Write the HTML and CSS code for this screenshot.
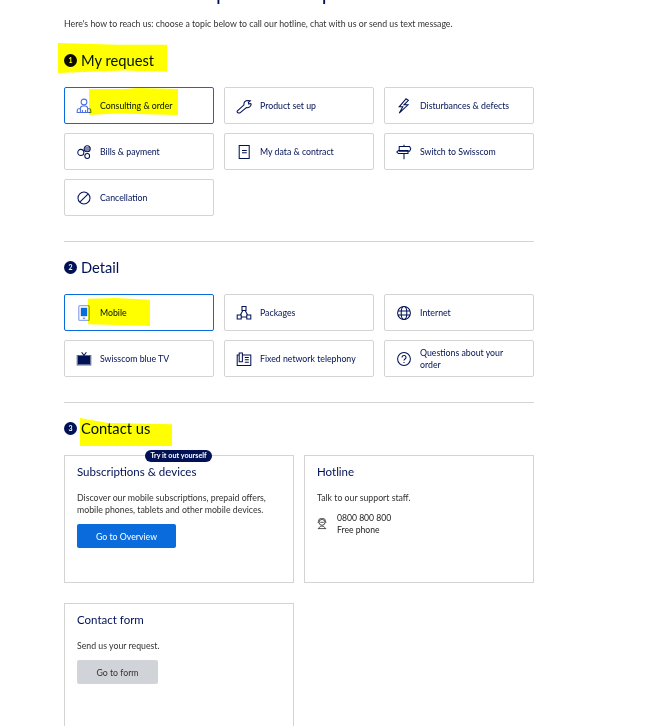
FILE: index.html
```html
<!DOCTYPE html>
<html lang="en">
<head>
<meta charset="utf-8">
<title>Contact</title>
<link rel="stylesheet" href="styles.css">
</head>
<body>
<main class="page">
  <h1 class="title">Contact help and shop</h1>
  <p class="intro">Here's how to reach us: choose a topic below to call our hotline, chat with us or send us text message.</p>

  <section class="step">
    <h2 class="step-title"><span class="num num-first">1</span>My request</h2>
    <div class="tiles">
      <a class="tile tile-on"><svg class="ico" viewBox="0 0 20 20"><g class="sel"><circle cx="10" cy="5" r="3.600"/><path d="M5.500 18v-5a3 3 0 0 1 3-3h3a3 3 0 0 1 3 3v5zM5.500 13.500H3.500a2 2 0 0 0-2 2V18h4M14.500 13.500h2a2 2 0 0 1 2 2V18h-4M8 18v-3M12 18v-3"/></g></svg><span>Consulting &amp; order</span></a>
      <a class="tile"><svg class="ico" viewBox="0 0 20 20"><path d="M1.500 16.500 10 8.500c-.5-3 1.500-5.500 5-5.500l3 .5-2.500 2 .5 2 2-.5 1 .5c0 3-3 5-6 4.500L5 18.500c-1.500 1-4.500-.5-3.500-2z"/></svg><span>Product set up</span></a>
      <a class="tile"><svg class="ico" viewBox="0 0 20 20"><path d="M12.500 1 4 11h4.500l-4.500 8 11-10.500h-5L15.500 3z"/></svg><span>Disturbances &amp; defects</span></a>
      <a class="tile"><svg class="ico" viewBox="0 0 20 20"><circle cx="14" cy="6" r="3.800"/><circle cx="6" cy="10.500" r="3.800"/><circle cx="14" cy="15" r="3"/><path d="M10.500 5h7M10.500 7.500h7"/></svg><span>Bills &amp; payment</span></a>
      <a class="tile"><svg class="ico" viewBox="0 0 20 20"><path d="M4 2h12.500v16H4zM7.500 8h6M7.500 11h6"/></svg><span>My data &amp; contract</span></a>
      <a class="tile"><svg class="ico" viewBox="0 0 20 20"><path d="M4 3h13l1.500 3L17 9H4zM3 8h12v4H3L1 10zM10 1v2M10 12v7"/></svg><span>Switch to Swisscom</span></a>
      <a class="tile"><svg class="ico" viewBox="0 0 20 20"><circle cx="10" cy="10" r="7.500"/><path d="M4.700 15.300 15.300 4.700"/></svg><span>Cancellation</span></a>
    </div>
  </section>

  <hr class="rule">

  <section class="step">
    <h2 class="step-title"><span class="num">2</span>Detail</h2>
    <div class="tiles">
      <a class="tile tile-on"><svg class="ico" viewBox="0 0 20 20"><rect class="sel-soft" x="3.500" y=".8" width="13" height="18.400" rx="1.500"/><rect class="fill-blue" x="6" y="3.500" width="8" height="10.500"/><path class="sel" d="M8.500 16.500h3"/></svg><span>Mobile</span></a>
      <a class="tile"><svg class="ico" viewBox="0 0 20 20"><path d="M7.500 2h5v5h-5zM1.500 12.500h5v5h-5zM13.500 12.500h5v5h-5zM8.500 7l-3 5.500M11.500 7l3 5.500M6.500 15h7"/></svg><span>Packages</span></a>
      <a class="tile"><svg class="ico" viewBox="0 0 20 20"><circle cx="10" cy="10" r="8"/><ellipse cx="10" cy="10" rx="3.500" ry="8"/><path d="M2.500 7.500h15M2.500 12.500h15"/></svg><span>Internet</span></a>
      <a class="tile"><svg class="ico" viewBox="0 0 20 20"><rect class="fill-navy" x="2" y="6" width="16" height="11"/><path class="amber" d="M1.500 5.500h17v12h-17z"/><path d="M7 1.500 10 5.500l3-4"/></svg><span>Swisscom blue TV</span></a>
      <a class="tile"><svg class="ico" viewBox="0 0 20 20"><path d="M1.500 18V5h2.500V2.500h4V5h10.500v13zM4 5v8.500h4V5M11 8h5M11 11h5M11 14h5"/></svg><span>Fixed network telephony</span></a>
      <a class="tile"><svg class="ico" viewBox="0 0 20 20"><circle cx="10" cy="10" r="8"/><path d="M7.500 8c0-3.300 5-3.300 5 0 0 2-2.500 2-2.500 4"/><path d="M10 13.600v1.300"/></svg><span class="tile-narrow">Questions about your order</span></a>
    </div>
  </section>

  <hr class="rule">

  <section class="step">
    <h2 class="step-title"><span class="num">3</span>Contact us</h2>
    <div class="cards">
      <article class="card">
        <span class="badge">Try it out yourself</span>
        <h3 class="card-title">Subscriptions &amp; devices</h3>
        <p class="card-text">Discover our mobile subscriptions, prepaid offers, mobile phones, tablets and other mobile devices.</p>
        <a class="btn btn-primary">Go to Overview</a>
      </article>
      <article class="card">
        <h3 class="card-title">Hotline</h3>
        <p class="card-text">Talk to our support staff.</p>
        <div class="phone">
          <svg class="phone-ico" viewBox="0 0 12 14"><circle cx="6" cy="5" r="3.500"/><path d="M1.500 6V4.500a4.500 4.500 0 0 1 9 0V6M4 5h4M1 12.500h10M2.500 12.500c0-2 1.500-3 3.500-3s3.500 1 3.500 3"/></svg>
          <div class="phone-text">0800 800 800<br>Free phone</div>
        </div>
      </article>
      <article class="card">
        <h3 class="card-title">Contact form</h3>
        <p class="card-text">Send us your request.</p>
        <a class="btn btn-muted">Go to form</a>
      </article>
    </div>
  </section>

  <span class="mark mark-a"></span>
  <span class="mark mark-b"></span>
  <span class="mark mark-c"></span>
  <span class="mark mark-d"></span>
</main>
</body>
</html>
```

FILE: styles.css
```css
* { box-sizing: border-box; }
html, body { height: 100%; margin: 0; overflow: hidden; background: #fff; }
body { font-family: "Lato", "Open Sans", sans-serif; color: #001155; }
.page { display: flow-root; position: relative; width: 470px; margin-left: 64px; height: 100%; }
.title { margin: -26px 0 0; padding-left: 30px; height: 44px; font-family: "Open Sans", sans-serif; font-size: 23px; line-height: 30px; font-weight: 400; white-space: nowrap; color: #001155; }
.intro { margin: 0 0 18px; height: 12px; font-size: 8.750px; line-height: 12px; color: #333; white-space: nowrap; }
.step { margin: 0; }
.step-title { display: flex; align-items: center; margin: 0; height: 24px; font-size: 14.700px; font-weight: 400; color: #001155; }
.num { display: flex; align-items: center; justify-content: center; width: 13px; height: 13px; margin-right: 4px; border-radius: 50%; background: #001155; color: #fff; font-size: 7px; font-weight: 700; }
.num-first { background: #0b0b1e; }
.tiles { display: grid; grid-template-columns: repeat(3, 150px); grid-auto-rows: 37px; gap: 9px 10px; margin-top: 15px; }
.tile { display: flex; align-items: center; gap: 8px; padding: 0 11px; border: 1px solid #d4d4d4; border-radius: 2px; background: #fff; font-size: 8.750px; line-height: 12px; color: #001155; }
.tile-on { border-color: #0a6cdc; }
.tile-narrow { width: 95px; }
.ico { flex: none; width: 16px; height: 16px; fill: none; stroke: #001155; stroke-width: 1.300; }
.sel { stroke: #4a6fe0; }
.sel-soft { stroke: #8fa8ee; stroke-width: 1.600; }
.fill-blue { fill: #0a6cdc; stroke: none; }
.fill-navy { fill: #001155; stroke: none; }
.amber { stroke: #5a6a8a; }
.rule { margin: 25px 0 13px; border: 0; border-top: 1px solid #d4d4d4; }
.cards { display: grid; grid-template-columns: repeat(2, 230px); grid-auto-rows: 128px; gap: 20px 10px; margin-top: 15px; }
.card { position: relative; padding: 9px 12px; border: 1px solid #d4d4d4; background: #fff; }
.card-title { margin: 0; font-size: 11.500px; line-height: 14px; font-weight: 400; color: #001155; }
.card-text { margin: 13px 0 0; font-size: 8.750px; line-height: 12px; color: #333; }
.badge { position: absolute; top: -6px; left: 80px; width: 67px; height: 12px; border-radius: 6px; background: #001155; color: #fff; font-size: 7.200px; line-height: 12px; font-weight: 700; text-align: center; white-space: nowrap; }
.btn { display: flex; align-items: center; justify-content: center; height: 24px; margin-top: 8px; border-radius: 2px; font-size: 8.750px; }
.btn-primary { width: 99px; background: #0a6cdc; color: #fff; }
.btn-muted { width: 81px; background: #d0d4d8; color: #333; }
.phone { display: flex; align-items: center; gap: 10px; margin-top: 8px; font-size: 8.600px; line-height: 12px; color: #222; }
.phone-ico { flex: none; width: 10px; height: 12px; fill: none; stroke: #333; stroke-width: 1; }
.mark { position: absolute; background: #ffff00; mix-blend-mode: multiply; }
.mark-a { left: -6px; top: 43px; width: 109px; height: 30px; clip-path: polygon(0 0, 55% 6%, 100% 6%, 100% 96%, 60% 92%, 0 100%); }
.mark-b { left: 25px; top: 88px; width: 89px; height: 27px; clip-path: polygon(0 4%, 40% 4%, 55% 0, 100% 4%, 100% 100%, 30% 94%, 0 100%); }
.mark-c { left: 24px; top: 298px; width: 62px; height: 28px; clip-path: polygon(0 3%, 45% 0, 100% 6%, 100% 100%, 50% 96%, 0 94%); }
.mark-d { left: 16px; top: 418px; width: 92px; height: 28px; clip-path: polygon(0 0, 30% 18%, 100% 22%, 100% 100%, 0 100%); }
```
